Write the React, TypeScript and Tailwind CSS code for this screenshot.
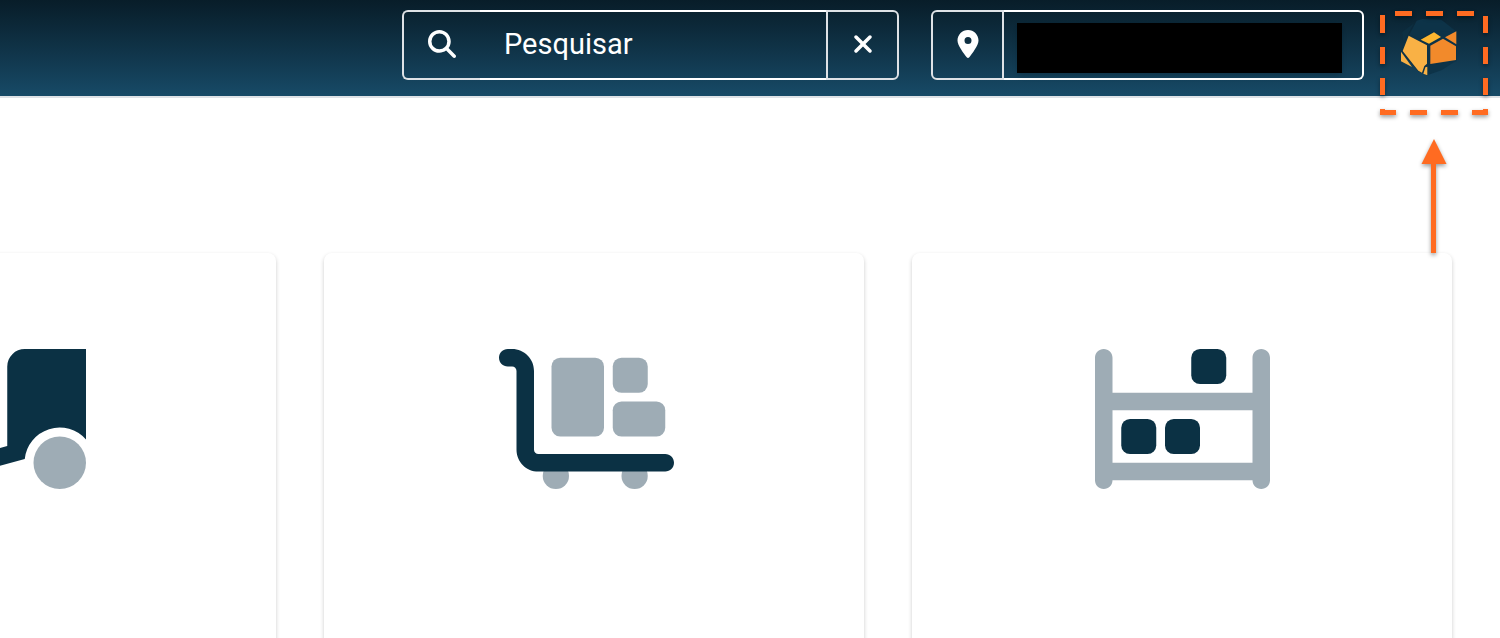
import { FaLocationDot, FaMagnifyingGlass, FaXmark } from 'react-icons/fa6';
import type { ReactNode } from 'react';

function TruckIcon() {
  return (
    <svg viewBox="0 0 640 512" className="h-[140px] w-[175px]" aria-hidden="true">
      <path
        fill="#0b3144"
        d="M352 64a64 64 0 0 1 64-64H640V331.3A128 128 0 0 0 416 402L41 504C24 508 6 498 1 481s5-35 22-39L352 355z"
      />
      <circle cx="544" cy="416" r="96" fill="#9eacb5" />
    </svg>
  );
}

function CartIcon() {
  return (
    <svg viewBox="0 0 640 512" className="h-[140px] w-[175px]" aria-hidden="true">
      <g fill="#9eacb5">
        <rect x="192" y="32" width="192" height="288" rx="32" />
        <rect x="416" y="32" width="128" height="128" rx="32" />
        <rect x="416" y="192" width="192" height="128" rx="32" />
        <circle cx="208" cy="464" r="48" />
        <circle cx="496" cy="464" r="48" />
      </g>
      <path
        fill="#0b3144"
        d="M0 32C0 14.3 14.3 0 32 0H48c44.2 0 80 35.8 80 80V368c0 8.8 7.2 16 16 16H608c17.7 0 32 14.3 32 32s-14.3 32-32 32H144c-44.2 0-80-35.8-80-80V80c0-8.8-7.2-16-16-16H32C14.3 64 0 49.7 0 32z"
      />
    </svg>
  );
}

function ShelvesIcon() {
  return (
    <svg viewBox="0 0 640 512" className="h-[140px] w-[175px]" aria-hidden="true">
      <path
        fill="#9eacb5"
        d="M32 0C49.7 0 64 14.3 64 32V160H576V32c0-17.7 14.3-32 32-32s32 14.3 32 32V480c0 17.7-14.3 32-32 32s-32-14.3-32-32H64c0 17.7-14.3 32-32 32s-32-14.3-32-32V32C0 14.3 14.3 0 32 0zM64 224V416H576V224z"
      />
      <g fill="#0b3144">
        <rect x="352" y="0" width="128" height="128" rx="32" />
        <rect x="96" y="256" width="128" height="128" rx="32" />
        <rect x="256" y="256" width="128" height="128" rx="32" />
      </g>
    </svg>
  );
}

function BoxLogo() {
  return (
    <svg viewBox="46 29 195 195" className="size-[65px]" aria-hidden="true">
      <g fill="#0d3348">
        <path d="M86 88 108 46 125 41 182 43 224 76 194 94 160 78 119 101z" />
        <path d="M64 80 100 54 80 90 68 112z" opacity=".5" />
        <path d="M144 180 226 166 184 194 144 208z" />
        <path d="M60 136 84 88 120 100 160 78 228 78V168L148 180 142 212 128 204 112 198z" />
      </g>
      <path fill="#f9b145" d="M84 91 139 120V175L131 182 124 202 113 196 66 137z" />
      <path fill="#fdb62f" d="M120 103 160 81 181 95 145 115z" />
      <path fill="#f28a2b" d="M149 121 187 100 226 123V164L149 176z" />
      <path fill="#f28a2b" d="M193 96 227 78V117z" />
      <path fill="#f9b145" d="M61 139 94 185 61 168z" />
      <path fill="#f9b145" d="M134 186 140 184V210L128 205z" />
    </svg>
  );
}

function Highlight() {
  return (
    <svg
      viewBox="0 0 108 250"
      className="pointer-events-none absolute top-[11px] left-0 h-[250px] w-[108px] overflow-visible drop-shadow-[0_2px_2px_rgba(0,0,0,0.4)]"
      aria-hidden="true"
    >
      <path
        d="M2.5 21V2.5H105.5V101.5H2.5V21"
        fill="none"
        stroke="#ff6b21"
        strokeWidth="5"
        strokeDasharray="17 14"
      />
      <path d="M54 128 66.5 153H56V242H51V153H41.5z" fill="#ff6b21" />
    </svg>
  );
}

function Card({ label, className, children }: { label: string; className: string; children: ReactNode }) {
  return (
    <a
      href="#"
      aria-label={label}
      className={`flex min-h-[440px] items-start justify-center rounded-lg bg-white pt-24 shadow-[0_2px_4px_rgba(0,0,0,0.2)] ${className}`}
    >
      {children}
    </a>
  );
}

export default function App() {
  return (
    <div className="flex h-screen flex-col overflow-hidden bg-white font-[Roboto,sans-serif]">
      <header className="relative z-10 flex h-[98px] shrink-0 items-start justify-end border-b-2 border-[#dee2e6] bg-linear-to-b from-[#081d29] to-[#174a67] pr-3">
        <form role="search" className="mt-[10px] mr-8 flex h-[70px] w-[497px]">
          <label
            htmlFor="search"
            className="flex w-[78px] items-center rounded-l-md border-2 border-r-0 border-[#dee2e6] pb-0.5 pl-6 text-white"
          >
            <FaMagnifyingGlass className="size-7" aria-label="Pesquisar" />
          </label>
          <input
            id="search"
            type="text"
            placeholder="Pesquisar"
            className="min-w-0 flex-1 border-y-2 border-white bg-transparent px-6 text-[29px] text-white outline-none placeholder:text-white placeholder:opacity-100"
          />
          <button
            type="button"
            aria-label="Limpar"
            className="flex w-[73px] items-center justify-center rounded-r-md border-2 border-[#dee2e6] pb-0.5 text-white"
          >
            <FaXmark className="size-7" />
          </button>
        </form>
        <div className="mt-[10px] mr-4 flex h-[70px] w-[433px]">
          <label
            htmlFor="place"
            className="flex w-[73px] items-center justify-center rounded-l-md border-2 border-[#dee2e6] pb-0.5 text-white"
          >
            <FaLocationDot className="size-7" aria-label="Local" />
          </label>
          <div className="flex flex-1 items-start rounded-r-md border-2 border-l-0 border-white pt-[11px] pr-5 pl-[13px]">
            <input id="place" type="text" className="h-[50px] w-full min-w-0 bg-black px-3 text-[29px] text-black shadow-md outline-none" />
          </div>
        </div>
        <div className="relative w-[108px]">
          <button type="button" aria-label="Conta" className="mt-[15px] ml-4 block">
            <BoxLogo />
          </button>
          <Highlight />
        </div>
      </header>
      <main className="-ml-[264px] grid grid-cols-3 gap-12 pt-[155px] pr-12">
        <Card label="Caminhão" className="pr-4">
          <TruckIcon />
        </Card>
        <Card label="Carrinho" className="pr-4">
          <CartIcon />
        </Card>
        <Card label="Prateleiras" className="pr-0">
          <ShelvesIcon />
        </Card>
      </main>
    </div>
  );
}
